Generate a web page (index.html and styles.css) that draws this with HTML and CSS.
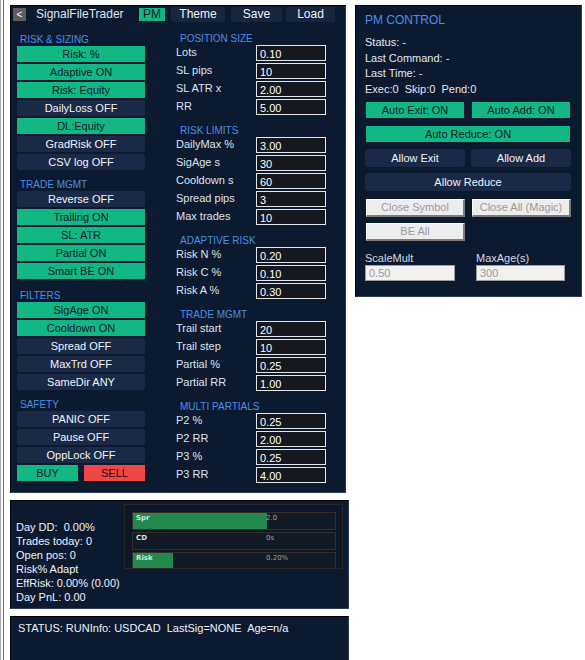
FILE: index.html
```html
<!DOCTYPE html>
<html>
<head>
<meta charset="utf-8">
<link rel="stylesheet" href="styles.css">
</head>
<body>
<div class="page">
  <div class="chrome"></div>
  <div class="leftcol">
    <div class="panel main">
      <div class="titlebar">
        <div class="back">&lt;</div>
        <div class="title">SignalFileTrader</div>
        <div class="tb pm">PM</div>
        <div class="tb theme">Theme</div>
        <div class="tb save">Save</div>
        <div class="tb load">Load</div>
      </div>
      <div class="body">
        <div class="lcol">
          <div class="sh first">RISK &amp; SIZING</div>
          <div class="btn on">Risk: %</div>
          <div class="btn on">Adaptive ON</div>
          <div class="btn on">Risk: Equity</div>
          <div class="btn off">DailyLoss OFF</div>
          <div class="btn on">DL:Equity</div>
          <div class="btn off">GradRisk OFF</div>
          <div class="btn off">CSV log OFF</div>
          <div class="sh">TRADE MGMT</div>
          <div class="btn off">Reverse OFF</div>
          <div class="btn on">Trailing ON</div>
          <div class="btn on">SL: ATR</div>
          <div class="btn on">Partial ON</div>
          <div class="btn on">Smart BE ON</div>
          <div class="sh wide">FILTERS</div>
          <div class="btn on">SigAge ON</div>
          <div class="btn on">Cooldown ON</div>
          <div class="btn off">Spread OFF</div>
          <div class="btn off">MaxTrd OFF</div>
          <div class="btn off">SameDir ANY</div>
          <div class="sh">SAFETY</div>
          <div class="btn off">PANIC OFF</div>
          <div class="btn off">Pause OFF</div>
          <div class="btn off">OppLock OFF</div>
          <div class="bs">
            <div class="btn on buy">BUY</div>
            <div class="btn sell">SELL</div>
          </div>
        </div>
        <div class="rcol">
          <div class="rh first">POSITION SIZE</div>
          <div class="row"><span class="lbl">Lots</span><span class="inp">0.10</span></div>
          <div class="row"><span class="lbl">SL pips</span><span class="inp">10</span></div>
          <div class="row"><span class="lbl">SL ATR x</span><span class="inp">2.00</span></div>
          <div class="row"><span class="lbl">RR</span><span class="inp">5.00</span></div>
          <div class="rh">RISK LIMITS</div>
          <div class="row"><span class="lbl">DailyMax %</span><span class="inp">3.00</span></div>
          <div class="row"><span class="lbl">SigAge s</span><span class="inp">30</span></div>
          <div class="row"><span class="lbl">Cooldown s</span><span class="inp">60</span></div>
          <div class="row"><span class="lbl">Spread pips</span><span class="inp">3</span></div>
          <div class="row"><span class="lbl">Max trades</span><span class="inp">10</span></div>
          <div class="rh">ADAPTIVE RISK</div>
          <div class="row"><span class="lbl">Risk N %</span><span class="inp">0.20</span></div>
          <div class="row"><span class="lbl">Risk C %</span><span class="inp">0.10</span></div>
          <div class="row"><span class="lbl">Risk A %</span><span class="inp">0.30</span></div>
          <div class="rh">TRADE MGMT</div>
          <div class="row"><span class="lbl">Trail start</span><span class="inp">20</span></div>
          <div class="row"><span class="lbl">Trail step</span><span class="inp">10</span></div>
          <div class="row"><span class="lbl">Partial %</span><span class="inp">0.25</span></div>
          <div class="row"><span class="lbl">Partial RR</span><span class="inp">1.00</span></div>
          <div class="rh">MULTI PARTIALS</div>
          <div class="row"><span class="lbl">P2 %</span><span class="inp">0.25</span></div>
          <div class="row"><span class="lbl">P2 RR</span><span class="inp">2.00</span></div>
          <div class="row"><span class="lbl">P3 %</span><span class="inp">0.25</span></div>
          <div class="row"><span class="lbl">P3 RR</span><span class="inp">4.00</span></div>
        </div>
      </div>
    </div>

    <div class="panel stats">
      <div class="stext">
        <div class="ln">Day DD:  0.00%</div>
        <div class="ln">Trades today: 0</div>
        <div class="ln">Open pos: 0</div>
        <div class="ln">Risk% Adapt</div>
        <div class="ln">EffRisk: 0.00% (0.00)</div>
        <div class="ln">Day PnL: 0.00</div>
      </div>
      <div class="bars">
        <div class="bar"><div class="fill" style="width:66.3%"></div><span class="bl">Spr</span><span class="bv">2.0</span></div>
        <div class="bar"><div class="fill" style="width:0%"></div><span class="bl">CD</span><span class="bv">0s</span></div>
        <div class="bar"><div class="fill" style="width:19.8%"></div><span class="bl">Risk</span><span class="bv">0.20%</span></div>
      </div>
    </div>

    <div class="panel status">
      <div class="stline">STATUS: RUNInfo: USDCAD  LastSig=NONE  Age=n/a</div>
    </div>
  </div>

  <div class="panel pmpanel">
    <div class="pmtitle">PM CONTROL</div>
    <div class="pmlines">
      <div class="ln">Status: -</div>
      <div class="ln">Last Command: -</div>
      <div class="ln">Last Time: -</div>
      <div class="ln">Exec:0  Skip:0  Pend:0</div>
    </div>
    <div class="pgrid r1">
      <div class="pb on">Auto Exit: ON</div>
      <div class="pb on">Auto Add: ON</div>
    </div>
    <div class="pgrid r2">
      <div class="pb on span">Auto Reduce: ON</div>
    </div>
    <div class="pgrid r3">
      <div class="pb dark">Allow Exit</div>
      <div class="pb dark">Allow Add</div>
    </div>
    <div class="pgrid r4">
      <div class="pb dark span">Allow Reduce</div>
    </div>
    <div class="pgrid r5">
      <div class="pb dis">Close Symbol</div>
      <div class="pb dis">Close All (Magic)</div>
    </div>
    <div class="pgrid r6">
      <div class="pb dis">BE All</div>
    </div>
    <div class="fields">
      <div class="field f1"><div class="flbl">ScaleMult</div><div class="finp">0.50</div></div>
      <div class="field f2"><div class="flbl">MaxAge(s)</div><div class="finp">300</div></div>
    </div>
  </div>
</div>
</body>
</html>
```
FILE: styles.css
```css
* { box-sizing: border-box; }
html, body { margin: 0; padding: 0; background: #ffffff; }
body {
  width: 585px;
  height: 660px;
  overflow: hidden;
  font-family: "Liberation Sans", Arial, sans-serif;
  font-size: 11px;
  color: #e2e8f2;
}
.page {
  display: flex;
  align-items: flex-start;
  padding-top: 5px;
  height: 660px;
}
.chrome {
  width: 4px;
  height: 660px;
  margin-top: -5px;
  border-left: 1px solid #a6a6a6;
  border-right: 1px solid #6a6a6a;
  background: #ffffff;
  flex: none;
}
.leftcol {
  margin-left: 6px;
  width: 339px;
  flex: none;
  display: flex;
  flex-direction: column;
}
.panel {
  background: #0c1a30;
  border-top: 1px solid #000000;
  border-left: 1px solid #000000;
  border-right: 1px solid #2e3d5a;
  border-bottom: 1px solid #2e3d5a;
}
.main {
  width: 336px;
  height: 488px;
}
.ln { white-space: pre; }

/* title bar */
.titlebar {
  display: flex;
  align-items: center;
  height: 16px;
  padding-top: 1px;
  padding-left: 2px;
}
.back {
  width: 13px;
  height: 13px;
  background: #5c5c5c;
  color: #ffffff;
  font-size: 10px;
  line-height: 13px;
  text-align: center;
}
.title {
  width: 103px;
  margin-left: 10px;
  font-size: 12px;
  color: #dfe6f2;
  line-height: 15px;
}
.tb {
  height: 15px;
  line-height: 15px;
  text-align: center;
  font-size: 12px;
  color: #f0f4fb;
  background: #17253f;
  border-radius: 2px;
}
.tb.pm {
  width: 26px;
  height: 13px;
  line-height: 13px;
  background: #12b783;
  color: #0b1626;
  border-radius: 0;
}
.tb.theme { width: 54px; margin-left: 6px; }
.tb.save { width: 51px; margin-left: 6px; }
.tb.load { width: 49px; margin-left: 4px; }

.body {
  display: flex;
  align-items: flex-start;
  padding-top: 10px;
}
.lcol {
  width: 128px;
  margin-left: 6px;
  padding-top: 1px;
  display: flex;
  flex-direction: column;
}
.sh, .rh {
  height: 13px;
  line-height: 13px;
  font-size: 10px;
  color: #4a8ee6;
  white-space: nowrap;
}
.sh { padding-left: 3px; margin-top: 6px; }
.sh.wide { margin-top: 8px; }
.sh.first, .rh.first { margin-top: 0; }
.btn {
  height: 16px;
  line-height: 16px;
  margin-bottom: 2px;
  text-align: center;
  font-size: 11px;
  white-space: nowrap;
}
.btn.on { background: #12b783; color: #0b1a2b; }
.btn.off { background: #1a2946; color: #f2f5fb; border-radius: 2px; }
.btn.sell { background: #ef4646; color: #1a0c10; }
.bs {
  display: flex;
  gap: 6px;
}
.bs .btn { width: 61px; }

.rcol {
  width: 150px;
  margin-left: 31px;
  display: flex;
  flex-direction: column;
}
.rh { padding-left: 4px; margin-top: 7px; }
.row {
  display: flex;
  align-items: flex-start;
  height: 16px;
  margin-bottom: 2px;
}
.lbl {
  width: 80px;
  line-height: 14px;
  font-size: 11px;
  color: #dde4ef;
  white-space: nowrap;
}
.inp {
  width: 70px;
  height: 16px;
  border: 1px solid #e4e6ea;
  background: #15181f;
  color: #ffffff;
  padding: 1px 0 0 3px;
  line-height: 14px;
  font-size: 11px;
}

/* stats panel */
.stats {
  margin-top: 7px;
  width: 339px;
  height: 109px;
  display: flex;
  align-items: flex-start;
}
.stext {
  width: 113px;
  padding-left: 5px;
  padding-top: 19px;
  line-height: 14px;
  font-size: 11px;
  color: #eef2f8;
  flex: none;
}
.bars {
  margin-top: 3px;
  width: 219px;
  height: 65px;
  overflow: hidden;
  border: 1px solid #2c2521;
  background: #0e1727;
  padding: 7px 0 0 7px;
  display: flex;
  flex-direction: column;
  gap: 2px;
  flex: none;
}
.bar {
  position: relative;
  width: 204px;
  height: 18px;
  flex: none;
  border: 1px solid #3a2c26;
  background: #121a26;
}
.fill {
  height: 16px;
  background: #23884d;
}
.bl, .bv {
  position: absolute;
  top: 1px;
  font-family: "DejaVu Sans", sans-serif;
  font-size: 7px;
  line-height: 9px;
  white-space: nowrap;
}
.bl { left: 3px; font-weight: bold; color: #d6e6da; }
.bv { left: 133px; color: #9aa2ae; }

/* status panel */
.status {
  margin-top: 7px;
  width: 339px;
  height: 60px;
  padding: 4px 0 0 7px;
}
.stline {
  line-height: 14px;
  font-size: 11px;
  color: #eef2f8;
  white-space: pre;
}

/* PM panel */
.pmpanel {
  margin-left: 6px;
  width: 227px;
  height: 292px;
  padding-left: 9px;
  flex: none;
}
.pmtitle {
  margin-top: 6px;
  font-size: 12px;
  line-height: 16px;
  color: #4a8ee6;
}
.pmlines {
  margin-top: 7px;
  line-height: 15.67px;
  font-size: 11px;
  color: #e2e8f2;
}
.pgrid {
  display: grid;
  grid-template-columns: 100px 100px;
  column-gap: 6px;
}
.r1 { margin-top: 4px; }
.r2 { margin-top: 8px; }
.r3 { margin-top: 7px; }
.r4 { margin-top: 6px; }
.r5 { margin-top: 8px; }
.r6 { margin-top: 6px; }
.pb {
  text-align: center;
  font-size: 11px;
  white-space: nowrap;
}
.pb.span { grid-column: 1 / 3; }
.pb.on {
  height: 16px;
  line-height: 16px;
  margin: 0 1px;
  background: #12b783;
  color: #0b1a2b;
}
.pb.dark {
  height: 18px;
  line-height: 18px;
  background: #1a2946;
  color: #f0f4fb;
  border-radius: 3px;
}
.pb.dis {
  height: 18px;
  line-height: 15px;
  margin-left: 1px;
  background: #ededed;
  color: #9a9a9a;
  border-top: 1px solid #ffffff;
  border-left: 1px solid #ffffff;
  border-right: 2px solid #7c7c7c;
  border-bottom: 2px solid #7c7c7c;
}
.fields {
  margin-top: 11px;
  display: grid;
  grid-template-columns: 111px 90px;
}
.flbl {
  line-height: 13px;
  font-size: 11px;
  color: #d4d9e2;
}
.finp {
  width: 90px;
  height: 16px;
  background: #f0f0f0;
  border: 1px solid #9c9c9c;
  color: #9a9a9a;
  padding-left: 3px;
  line-height: 14px;
  font-size: 11px;
}
.f2 .finp { width: 89px; }
```
